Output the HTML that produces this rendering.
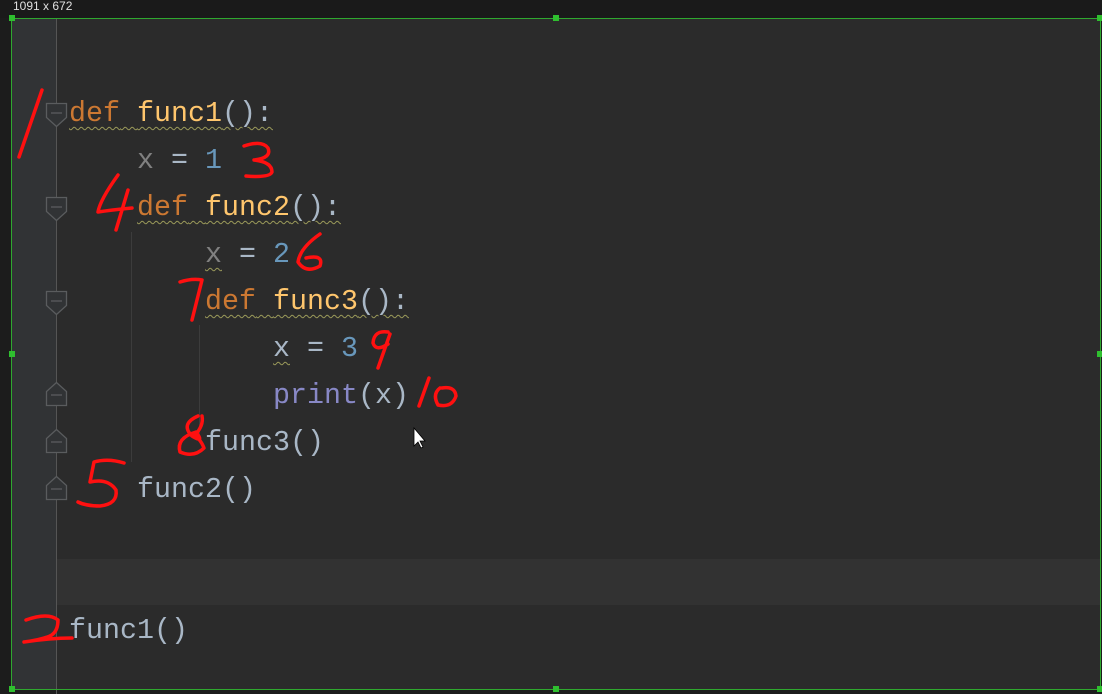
<!DOCTYPE html>
<html><head><meta charset="utf-8"><style>
html,body{margin:0;padding:0;}
body{width:1102px;height:694px;background:#1c1c1c;position:relative;overflow:hidden;font-family:"Liberation Mono",monospace;}
#top{position:absolute;left:0;top:0;width:1102px;height:18px;background:#1a1a1a;color:#e0e0e0;font:12px "Liberation Sans",sans-serif;line-height:13px;}
#top span{position:absolute;left:13px;top:0px;}
#ed{position:absolute;left:11px;top:18px;width:1089px;height:671px;background:#2b2b2b;}
#gut{position:absolute;left:11px;top:18px;width:45px;height:671px;background:#313335;}
#gl{position:absolute;left:56px;top:18px;width:1px;height:676px;background:#555;}
#cur{position:absolute;left:57px;top:559px;width:1043px;height:46px;background:#323232;}
#box{position:absolute;left:11px;top:18px;width:1088px;height:670px;border:1px solid #2fa82f;}
.h{position:absolute;width:6px;height:6px;background:#2fbf2f;}
.l{position:absolute;left:69px;font-size:28.33px;line-height:47px;height:47px;white-space:pre;color:#a9b7c6;}
.k{color:#cc7832}.f{color:#ffc66d}.n{color:#6897bb}.g{color:#808080}.p{color:#8888c6}
.w{text-decoration:underline wavy #9b9a5a;text-decoration-thickness:1px;text-underline-offset:5px;}
.ig{position:absolute;width:1px;background:#3c3c3c;}
</style></head><body>
<div id="top"><span>1091 x 672</span></div>
<div id="ed"></div><div id="gut"></div><div id="cur"></div><div id="gl"></div>
<div class="ig" style="left:131px;top:232px;height:230px"></div>
<div class="ig" style="left:199px;top:325px;height:112px"></div>

<div class="l" style="top:90px"><span class="w"><span class="k">def</span> <span class="f">func1</span>():</span></div>
<div class="l" style="top:137px">    <span class="g">x</span> = <span class="n">1</span></div>
<div class="l" style="top:184px">    <span class="w"><span class="k">def</span> <span class="f">func2</span>():</span></div>
<div class="l" style="top:231px">        <span class="g w">x</span> = <span class="n">2</span></div>
<div class="l" style="top:278px">        <span class="w"><span class="k">def</span> <span class="f">func3</span>():</span></div>
<div class="l" style="top:325px">            <span class="w">x</span> = <span class="n">3</span></div>
<div class="l" style="top:372px">            <span class="p">print</span>(x)</div>
<div class="l" style="top:419px">        func3()</div>
<div class="l" style="top:466px">    func2()</div>
<div class="l" style="top:607px">func1()</div>

<svg width="1102" height="694" style="position:absolute;left:0;top:0" fill="none">
<g stroke="#5a5c5e" stroke-width="1.3" fill="#313335">
<path d="M46.5 103.5h20v14l-10 9l-10-9z"/><path d="M51 113h11"/>
<path d="M46.5 197.5h20v14l-10 9l-10-9z"/><path d="M51 207h11"/>
<path d="M46.5 291.5h20v14l-10 9l-10-9z"/><path d="M51 301h11"/>
<path d="M46.5 405.5h20v-14l-10-9l-10 9z"/><path d="M51 395h11"/>
<path d="M46.5 452.5h20v-14l-10-9l-10 9z"/><path d="M51 442h11"/>
<path d="M46.5 499.5h20v-14l-10-9l-10 9z"/><path d="M51 489h11"/>
</g>
<path d="M414 428l0 18l4-4l3 6l2-1l-3-6l5 0z" fill="#fff" stroke="#000" stroke-width="0.8"/>
<g stroke="#ff1010" stroke-width="3.5" stroke-linecap="round" stroke-linejoin="round">
<path d="M42 90L19 157"/>
<path d="M244 146Q262 140 268 148Q272 158 254 160Q272 162 272 172Q270 178 246 176"/>
<path d="M118 175Q100 200 98 212Q112 210 132 208M128 190L116 230"/>
<path d="M320 234Q300 248 298 262Q306 274 320 266Q324 254 306 258"/>
<path d="M180 282Q192 278 202 280L192 320"/>
<path d="M388 332Q374 330 373 343Q376 352 388 344M390 334L378 368"/>
<path d="M429 378L419 406M440 388Q432 394 438 405Q452 408 456 396Q455 386 442 388"/>
<path d="M198 416Q180 424 192 436Q205 444 196 432Q176 438 180 452Q194 458 204 448Q200 438 194 436Q204 426 202 416"/>
<path d="M124 463Q108 458 94 462L90 482Q108 478 116 490Q118 504 100 506Q86 506 78 502"/>
<path d="M26 620Q48 612 58 620Q58 632 50 636Q40 640 24 642Q50 638 72 638"/>
</g>
</svg>
<div id="box"></div>
<div class="h" style="left:9px;top:15px"></div><div class="h" style="left:553px;top:15px"></div><div class="h" style="left:1097px;top:15px"></div>
<div class="h" style="left:9px;top:351px"></div><div class="h" style="left:1097px;top:351px"></div>
<div class="h" style="left:9px;top:686px"></div><div class="h" style="left:553px;top:686px"></div><div class="h" style="left:1097px;top:686px"></div>
</body></html>
